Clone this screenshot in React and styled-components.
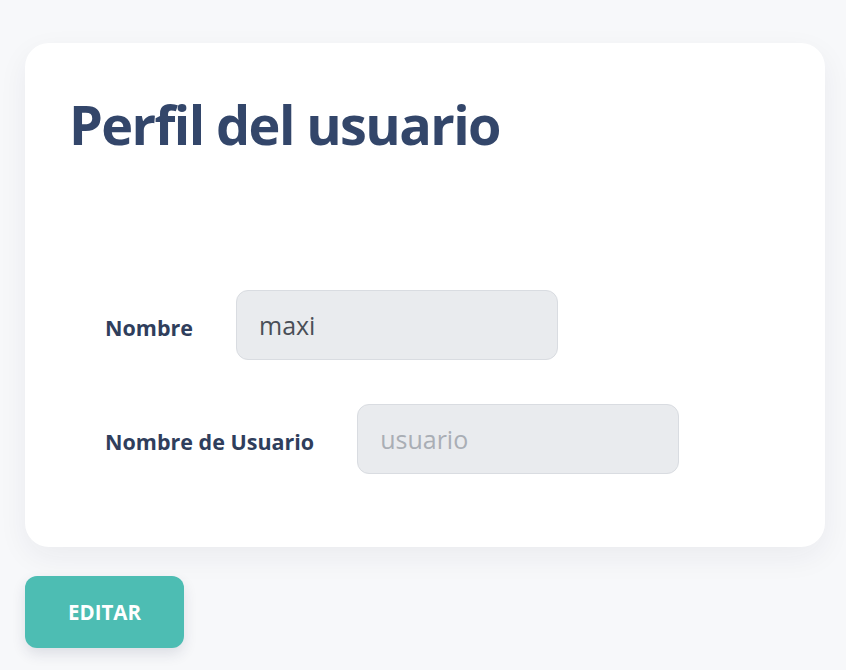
import React from "react";
import styled, { createGlobalStyle } from "styled-components";

const Global = createGlobalStyle`
  html, body { margin: 0; padding: 0; background: #f7f8fa; }
  body { font-family: "Open Sans", "Noto Sans", sans-serif; }
`;

const Page = styled.div`
  padding: 43px 21px 20px 25px;
  display: flex;
  flex-direction: column;
  align-items: flex-start;
  gap: 29px;
`;

const Card = styled.section`
  box-sizing: border-box;
  width: 800px;
  height: 504px;
  background: #ffffff;
  border-radius: 24px;
  box-shadow: 0 10px 30px rgba(30, 40, 70, 0.06);
  padding: 44px 44px 0 44px;
`;

const Title = styled.h1`
  margin: 0;
  font-size: 54px;
  font-weight: 700;
  letter-spacing: -1.6px;
  color: #33466a;
  line-height: 74px;
`;

const Form = styled.div`
  margin-top: 129px;
  padding-left: 36px;
  display: flex;
  flex-direction: column;
  gap: 44px;
`;

const Row = styled.div`
  display: flex;
  align-items: center;
  gap: 43px;
`;

const Label = styled.label`
  font-size: 21.5px;
  font-weight: 700;
  color: #2f3e5c;
  padding-top: 4px;
`;

const Input = styled.input`
  box-sizing: border-box;
  width: 322px;
  height: 70px;
  border-radius: 12px;
  border: 1px solid #d9dce1;
  background: #e9ebee;
  padding: 0 22px;
  font-family: "Open Sans", "Noto Sans", sans-serif;
  font-size: 25px;
  color: #4a4f57;
  outline: none;
  &::placeholder { color: #a9aeb5; }
`;

const Button = styled.button`
  width: 159px;
  height: 72px;
  border: none;
  border-radius: 12px;
  background: #4dbdb3;
  color: #ffffff;
  font-family: "Open Sans", "Noto Sans", sans-serif;
  font-size: 20.5px;
  font-weight: 700;
  box-shadow: 0 6px 14px rgba(30, 40, 70, 0.12);
  cursor: pointer;
`;

export default function App() {
  return (
    <>
      <Global />
      <Page>
        <Card>
          <Title>Perfil del usuario</Title>
          <Form>
            <Row>
              <Label>Nombre</Label>
              <Input defaultValue="maxi" readOnly />
            </Row>
            <Row>
              <Label>Nombre de Usuario</Label>
              <Input placeholder="usuario" readOnly />
            </Row>
          </Form>
        </Card>
        <Button>EDITAR</Button>
      </Page>
    </>
  );
}
